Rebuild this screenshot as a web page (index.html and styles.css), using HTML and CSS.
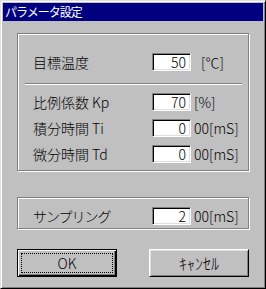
FILE: index.html
```html
<!DOCTYPE html>
<html lang="ja">

<head>
    <meta charset="UTF-8">
    <title>パラメータ設定</title>
    <link rel="stylesheet" href="styles.css">
</head>

<body>
    <div class="window">
        <div class="titlebar">パラメータ設定</div>

        <div class="content">
            <div class="group group-main">
                <div class="row">
                    <span class="label">目標温度</span>
                    <span class="field">50</span>
                    <span class="unit unit-wide">[℃]</span>
                </div>

                <div class="separator"></div>

                <div class="rows">
                    <div class="row">
                        <span class="label">比例係数 Kp</span>
                        <span class="field">70</span>
                        <span class="unit">[%]</span>
                    </div>
                    <div class="row">
                        <span class="label">積分時間 Ti</span>
                        <span class="field">0</span>
                        <span class="unit">00[mS]</span>
                    </div>
                    <div class="row">
                        <span class="label">微分時間 Td</span>
                        <span class="field">0</span>
                        <span class="unit">00[mS]</span>
                    </div>
                </div>
            </div>

            <div class="group group-sampling">
                <div class="row">
                    <span class="label label-narrow">サンプリング</span>
                    <span class="field">2</span>
                    <span class="unit">00[mS]</span>
                </div>
            </div>

            <div class="buttons">
                <button class="btn btn-default"><span class="focus">OK</span></button>
                <button class="btn"><span class="plain cancel">ｷｬﾝｾﾙ</span></button>
            </div>
        </div>
    </div>
</body>

</html>
```

FILE: styles.css
```css
body {
    margin: 0;
    font-family: "Noto Sans CJK JP", sans-serif;
    font-weight: 300;
    color: #000;
    background-color: #c0c0c0;
}

.window {
    box-sizing: border-box;
    width: 266px;
    height: 289px;
    padding: 2px;
    background-color: #c0c0c0;
    border: 1px solid;
    border-color: #dfdfdf #000 #000 #dfdfdf;
    box-shadow: inset 1px 1px #fff, inset -1px -1px #808080;
}

.titlebar {
    height: 18px;
    line-height: 18px;
    padding-left: 2px;
    background-color: #000080;
    color: #fff;
    font-size: 12px;
    font-weight: 400;
    letter-spacing: -1px;
}

.content {
    padding: 12px 14px 0 14px;
}

.group {
    box-sizing: border-box;
    border: 1px solid #808080;
    box-shadow: inset 1px 1px #fff, 1px 1px #fff;
    padding-left: 15px;
}

.group-main {
    height: 138px;
    padding-top: 18px;
}

.group-sampling {
    height: 32px;
    margin-top: 26px;
    padding-top: 8px;
}

.rows {
    display: flex;
    flex-direction: column;
    gap: 8px;
}

.row {
    display: grid;
    grid-template-columns: 119px 39px auto;
    align-items: center;
    height: 18px;
    font-size: 14px;
}

.label {
    white-space: nowrap;
}

.label-narrow {
    letter-spacing: -1px;
}

.field {
    box-sizing: border-box;
    height: 18px;
    line-height: 16px;
    padding-right: 4px;
    text-align: right;
    background-color: #fff;
    border: 1px solid;
    border-color: #808080 #fff #fff #808080;
    box-shadow: inset 1px 1px #000, inset -1px -1px #dfdfdf;
}

.unit {
    padding-left: 3px;
    white-space: nowrap;
}

.unit-wide {
    padding-left: 10px;
}

.separator {
    height: 1px;
    margin: 13px 6px 7px -8px;
    background-color: #808080;
    border-bottom: 1px solid #fff;
}

.buttons {
    display: flex;
    justify-content: space-between;
    margin-top: 20px;
}

.btn {
    box-sizing: border-box;
    display: flex;
    width: 100px;
    height: 28px;
    padding: 3px;
    font-family: "Noto Sans CJK JP", sans-serif;
    font-size: 14px;
    font-weight: 300;
    color: #000;
    background-color: #c0c0c0;
    border: 1px solid;
    border-color: #fff #000 #000 #fff;
    box-shadow: inset 1px 1px #dfdfdf, inset -1px -1px #808080;
}

.btn-default {
    border-color: #000;
    box-shadow: inset 1px 1px #fff, inset -1px -1px #000, inset -2px -2px #808080;
}

.focus,
.plain {
    flex: 1;
    display: flex;
    align-items: center;
    justify-content: center;
}

.cancel {
    font-size: 16px;
}

.focus {
    border: 1px dotted #000;
}
```
